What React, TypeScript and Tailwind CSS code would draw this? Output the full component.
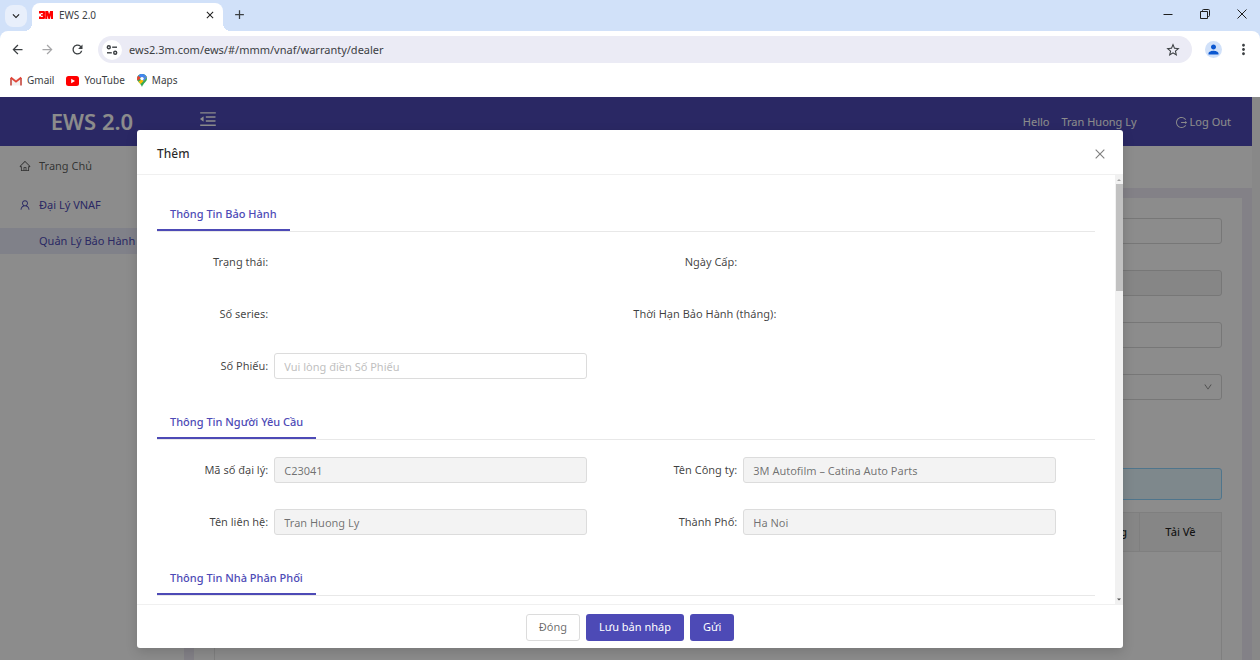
import type { ReactNode } from "react";
import {
  AiOutlineClose,
  AiOutlineDown,
  AiOutlineHome,
  AiOutlineLogout,
  AiOutlineMenuFold,
  AiOutlineUser,
} from "react-icons/ai";
import {
  MdAdd,
  MdArrowBack,
  MdArrowForward,
  MdClose,
  MdKeyboardArrowDown,
  MdMoreVert,
  MdPerson,
  MdRefresh,
  MdStarBorder,
} from "react-icons/md";

/* Logos */

function Logo3M() {
  return (
    <svg width="14" height="8" viewBox="0 0 14 8" fill="#ff0000" aria-hidden="true">
      <path d="M0 0h5.2L6.3 1v2.2L5.6 4l.7.8V7L5.2 8H0V5.4h2V6h1.8V4.8H2V3.2h1.8V2H2v.6H0z" />
      <path d="M6.3 0h2.8l1 3.2 1-3.2H14v8h-2.1V4.2L10.8 8H9.4L8.3 4.2V8h-2z" />
    </svg>
  );
}

function GmailLogo() {
  return (
    <svg width="12" height="10" viewBox="0 0 12 10" fill="none" aria-hidden="true">
      <path d="M1.500 2.500h9v7h-9z" fill="#f3f0f0" />
      <path d="M1 9.500V2M11 9.500V2" stroke="#cf6a62" strokeWidth="2" />
      <path d="M0.800 1.500L6 5.600l5.200-4.100" stroke="#e04436" strokeWidth="1.800" />
    </svg>
  );
}

function YoutubeLogo() {
  return (
    <svg width="13" height="10" viewBox="0 0 13 10" aria-hidden="true">
      <rect width="13" height="10" rx="2.500" fill="#ff0000" />
      <path d="M5.200 2.800v4.400L9 5z" fill="#fff" />
    </svg>
  );
}

function MapsLogo() {
  return (
    <svg width="10" height="13" viewBox="0 0 10 13" aria-hidden="true">
      <path d="M5 0C2.200 0 0 2.100 0 4.700 0 7.600 3.600 8.800 5 13c1.400-4.200 5-5.400 5-8.300C10 2.100 7.800 0 5 0z" fill="#34a853" />
      <path d="M5 0C3.500 0 2.100.6 1.200 1.700L5 4.700 9.200 2C8.300.8 6.800 0 5 0z" fill="#4285f4" />
      <path d="M9.200 2L1.400 7.700c.7.800 1.500 1.500 2.200 2.300L9.900 3.800c-.1-.7-.3-1.300-.7-1.800z" fill="#fbbc04" />
      <path d="M9.200 2L5 5l1.500 2 3.400-3.200c-.1-.7-.3-1.300-.7-1.800z" fill="#4285f4" />
      <path d="M1.200 1.700C.4 2.500 0 3.600 0 4.700c0 .8.200 1.400.500 2L4 4z" fill="#ea4335" />
      <circle cx="5" cy="4.600" r="1.700" fill="#fff" />
    </svg>
  );
}

function SiteSettingsIcon() {
  return (
    <svg width="12" height="12" viewBox="0 0 12 12" fill="none" stroke="#3c4043" strokeWidth="1.400" aria-hidden="true">
      <circle cx="2.800" cy="3.200" r="1.500" />
      <path d="M6.200 3.200H11" />
      <circle cx="9.200" cy="8.800" r="1.500" />
      <path d="M1 8.800h4.800" />
    </svg>
  );
}

/* Browser window */

function TabStrip() {
  return (
    <div className="flex h-[31px] items-center bg-[#d1e1f9]">
      <button
        aria-label="Search tabs"
        className="ml-[5px] mr-[5px] flex h-[22px] w-[22px] items-center justify-center rounded-lg bg-[#e8effb] text-[#1f1f1f]"
      >
        <MdKeyboardArrowDown size={14} />
      </button>
      <div className="relative mt-[3px] flex h-7 w-[191px] items-center rounded-t-lg bg-white px-[7px] pb-1">
        {/* Flared corners at the foot of the tab */}
        <span className="absolute bottom-0 -left-2 h-2 w-2 bg-[radial-gradient(circle_at_0_0,transparent_8px,white_8px)]" />
        <span className="absolute -right-2 bottom-0 h-2 w-2 bg-[radial-gradient(circle_at_100%_0,transparent_8px,white_8px)]" />
        <Logo3M />
        <span className="ml-[6px] flex-1 text-[10px] text-[#3c4043]">EWS 2.0</span>
        <button aria-label="Close tab" className="text-[#1f1f1f]">
          <MdClose size={12} />
        </button>
      </div>
      <button aria-label="New tab" className="ml-[9px] pb-[3px] text-[#3c4043]">
        <MdAdd size={15} />
      </button>
      <div className="ml-auto flex items-center gap-[27px] pb-[3px] pr-[13px] text-[#1f1f1f]">
        <button aria-label="Minimize">
          <svg width="10" height="10" viewBox="0 0 10 10" stroke="currentColor">
            <path d="M0.500 5.500h9" />
          </svg>
        </button>
        <button aria-label="Restore">
          <svg width="10" height="10" viewBox="0 0 10 10" fill="none" stroke="currentColor">
            <path d="M0.500 2.500h7v7h-7z" />
            <path d="M2.500 2.500v-1a1 1 0 0 1 1-1h5a1 1 0 0 1 1 1v5a1 1 0 0 1-1 1h-1" />
          </svg>
        </button>
        <button aria-label="Close window">
          <svg width="10" height="10" viewBox="0 0 10 10" stroke="currentColor">
            <path d="M0.500 0.500l9 9M9.500 0.500l-9 9" />
          </svg>
        </button>
      </div>
    </div>
  );
}

function Toolbar() {
  return (
    <div className="bg-[#d1e1f9]">
      <div className="flex h-[37px] items-center rounded-t-lg bg-white pl-[10px] pr-2 text-[#3c4043]">
        <div className="flex items-center gap-[15px]">
          <button aria-label="Back">
            <MdArrowBack size={15} />
          </button>
          <button aria-label="Forward" className="text-[#a6a6a8]">
            <MdArrowForward size={15} />
          </button>
          <button aria-label="Reload">
            <MdRefresh size={15} />
          </button>
        </div>
        <div className="ml-[13px] flex h-[27px] flex-1 items-center rounded-full bg-[#ebebf5] pl-1 pr-[11px]">
          <button
            aria-label="Site information"
            className="flex h-5 w-5 items-center justify-center rounded-full bg-white"
          >
            <SiteSettingsIcon />
          </button>
          <input
            aria-label="Address"
            defaultValue="ews2.3m.com/ews/#/mmm/vnaf/warranty/dealer"
            className="ml-[7px] flex-1 bg-transparent pt-px text-[11px] outline-none"
          />
          <button aria-label="Bookmark this tab">
            <MdStarBorder size={16} />
          </button>
        </div>
        <button
          aria-label="Profile"
          className="ml-[13px] mr-[13px] flex h-[17px] w-[17px] items-center justify-center rounded-full bg-[#d1e1f9] text-[#0b57d0]"
        >
          <MdPerson size={15} />
        </button>
        <button aria-label="Menu">
          <MdMoreVert size={17} />
        </button>
      </div>
    </div>
  );
}

function Bookmark({ icon, label }: { icon: ReactNode; label: string }) {
  return (
    <a href="#" className="flex items-center gap-[5px]">
      {icon}
      {label}
    </a>
  );
}

function BookmarksBar() {
  return (
    <nav className="flex h-[29px] items-center gap-3 bg-white pb-1 pl-[10px] text-[10px] text-[#3c4043]">
      <Bookmark icon={<GmailLogo />} label="Gmail" />
      <Bookmark icon={<YoutubeLogo />} label="YouTube" />
      <Bookmark icon={<MapsLogo />} label="Maps" />
    </nav>
  );
}

/* Warranty page behind the dialog */

function PageHeader() {
  return (
    <header className="flex h-[49px] shrink-0 items-center bg-[#4d4ab6] text-white">
      <h1 className="w-[184px] text-center text-[22px] font-semibold">EWS 2.0</h1>
      <button aria-label="Collapse menu" className="ml-[14px] pb-[5px]">
        <AiOutlineMenuFold size={20} />
      </button>
      <div className="ml-auto flex items-center pr-[21px] pt-px">
        <span>Hello</span>
        <span className="ml-3">Tran Huong Ly</span>
        <button className="ml-[38px] flex items-center gap-[2px]">
          <AiOutlineLogout size={13} />
          Log Out
        </button>
      </div>
    </header>
  );
}

function Sidebar() {
  return (
    <nav className="w-[184px] shrink-0 bg-white pt-[7px] text-black/65">
      <a href="#" className="flex h-[26px] items-center gap-2 pl-[19px]">
        <AiOutlineHome size={12} />
        Trang Chủ
      </a>
      <a href="#" className="mt-[13px] flex h-[26px] items-center gap-2 pl-[19px] text-[#4d4ab6]">
        <AiOutlineUser size={12} />
        Đại Lý VNAF
      </a>
      <a href="#" className="mt-[10px] flex h-[26px] items-center bg-[#eaecfa] pl-[39px] text-[#4d4ab6]">
        Quản Lý Bảo Hành
      </a>
    </nav>
  );
}

function WarrantyPage() {
  return (
    <main className="flex flex-1 flex-col bg-[#eeecf6]">
      <div className="h-[42px] shrink-0 bg-white" />
      <div className="mx-[10px] mt-[10px] flex-1 bg-white p-5">
        <div className="flex flex-col items-end gap-[26px]">
          <input aria-label="Số series" className="h-[26px] w-1/3 rounded-[3px] border border-[#d9d9d9]" />
          <input
            aria-label="Mã số đại lý"
            disabled
            className="h-[26px] w-1/3 rounded-[3px] border border-[#d9d9d9] bg-[#f5f5f5]"
          />
          <input aria-label="Số Phiếu" className="h-[26px] w-1/3 rounded-[3px] border border-[#d9d9d9]" />
          <div className="relative w-1/3">
            <select
              aria-label="Trạng thái"
              className="block h-[26px] w-full appearance-none rounded-[3px] border border-[#d9d9d9] bg-white"
            />
            <AiOutlineDown size={10} className="absolute right-[9px] top-2 text-black/50" />
          </div>
        </div>
        <div className="mt-[68px] h-8 rounded-[3px] border border-[#91d5ff] bg-[#e6f7ff]" />
        <table className="mt-3 h-[200px] w-full table-fixed border border-[#e8e8e8]">
          <thead>
            <tr className="h-[39px] border-b border-[#e8e8e8] bg-[#f5f5f5] text-black/85">
              <th className="pr-3 text-right font-medium">Số Lượng</th>
              <th className="w-[82px] border-l border-[#e8e8e8] font-medium">Tải Về</th>
            </tr>
          </thead>
          <tbody>
            <tr>
              <td colSpan={2} />
            </tr>
          </tbody>
        </table>
      </div>
    </main>
  );
}

/* Dialog */

function Section({ title, children }: { title: string; children?: ReactNode }) {
  return (
    <section className="mb-[25px]">
      <div className="flex h-9 border-b border-[#e8e8e8]">
        <h3 className="flex items-center border-b-2 border-[#4d4ab6] px-[13px] pt-1 font-medium text-[#4d4ab6]">
          {title}
        </h3>
      </div>
      <div className="mt-[17px] grid grid-cols-2 gap-y-[26px]">{children}</div>
    </section>
  );
}

type FieldProps = {
  id: string;
  label: string;
  value?: string;
  placeholder?: string;
};

function Field({ id, label, value, placeholder }: FieldProps) {
  return (
    <div className="flex h-[26px] items-center">
      <label htmlFor={id} className="w-1/4 pr-[6px] text-right whitespace-nowrap text-black/75">
        {label}:
      </label>
      <input
        id={id}
        defaultValue={value}
        placeholder={placeholder}
        disabled={value !== undefined}
        className="h-[26px] w-2/3 rounded-[3px] border border-[#dcdcdc] px-[9px] text-black/55 outline-none placeholder:text-[#bfbfbf] disabled:bg-[#f3f3f3]"
      />
    </div>
  );
}

function EmptyField({ label, wide }: { label: string; wide?: boolean }) {
  return (
    <div className="flex h-[26px] items-center">
      <span className={`${wide ? "w-1/3" : "w-1/4"} pr-[6px] text-right whitespace-nowrap text-black/75`}>
        {label}:
      </span>
    </div>
  );
}

function WarrantyDialog() {
  return (
    <div
      role="dialog"
      aria-labelledby="dialog-title"
      className="flex w-full max-w-[986px] flex-col rounded-[3px] bg-white shadow-[0_4px_12px_rgba(0,0,0,0.15)]"
    >
      <div className="flex h-[45px] shrink-0 items-center justify-between border-b border-[#f0f0f0] pl-5 pr-4 pt-[3px]">
        <h2 id="dialog-title" className="text-[12px] font-medium text-black/85">
          Thêm
        </h2>
        <button aria-label="Đóng hộp thoại" className="text-black/50">
          <AiOutlineClose size={14} />
        </button>
      </div>

      <div className="flex min-h-0 flex-1">
        <div className="min-w-0 flex-1 overflow-hidden px-5 pt-[21px]">
          <Section title="Thông Tin Bảo Hành">
            <EmptyField label="Trạng thái" />
            <EmptyField label="Ngày Cấp" />
            <EmptyField label="Số series" />
            <EmptyField label="Thời Hạn Bảo Hành (tháng)" wide />
            <Field id="so-phieu" label="Số Phiếu" placeholder="Vui lòng điền Số Phiếu" />
          </Section>
          <Section title="Thông Tin Người Yêu Cầu">
            <Field id="ma-dai-ly" label="Mã số đại lý" value="C23041" />
            <Field id="ten-cong-ty" label="Tên Công ty" value="3M Autofilm – Catina Auto Parts" />
            <Field id="ten-lien-he" label="Tên liên hệ" value="Tran Huong Ly" />
            <Field id="thanh-pho" label="Thành Phố" value="Ha Noi" />
          </Section>
          <Section title="Thông Tin Nhà Phân Phối" />
        </div>
        {/* Scrollbar */}
        <div className="flex w-2 flex-col items-center bg-[#f1f1f1]">
          <svg width="8" height="9" viewBox="0 0 8 9" fill="#a3a3a3">
            <path d="M2 6l2-2 2 2z" />
          </svg>
          <div className="h-[107px] w-[7px] bg-[#c1c1c1]" />
          <svg width="8" height="9" viewBox="0 0 8 9" fill="#505050" className="mt-auto">
            <path d="M2 3.500l2 2 2-2z" />
          </svg>
        </div>
      </div>

      <div className="flex h-[44px] shrink-0 items-center justify-center gap-[6px] border-t border-[#f0f0f0] pt-px">
        <button className="h-[27px] rounded-[3px] border border-[#dcdcdc] px-3 text-black/60">Đóng</button>
        <button className="h-[27px] rounded-[3px] bg-[#4d4ab6] px-[13px] text-white">Lưu bản nháp</button>
        <button className="h-[27px] rounded-[3px] bg-[#4d4ab6] px-[13px] text-white">Gửi</button>
      </div>
    </div>
  );
}

export default function App() {
  return (
    <div className="flex h-screen flex-col overflow-hidden font-['Noto_Sans',sans-serif] text-[11px]">
      <TabStrip />
      <Toolbar />
      <BookmarksBar />

      <div className="relative flex min-h-0 flex-1 overflow-hidden bg-[#f8f8f8] pr-2">
        <div className="flex min-w-0 flex-1 flex-col">
          <PageHeader />
          <div className="flex min-h-0 flex-1">
            <Sidebar />
            <WarrantyPage />
          </div>
        </div>

        {/* Mask */}
        <div className="absolute inset-0 flex justify-center bg-black/45 pb-3 pt-[33px]">
          <WarrantyDialog />
        </div>
      </div>
    </div>
  );
}
